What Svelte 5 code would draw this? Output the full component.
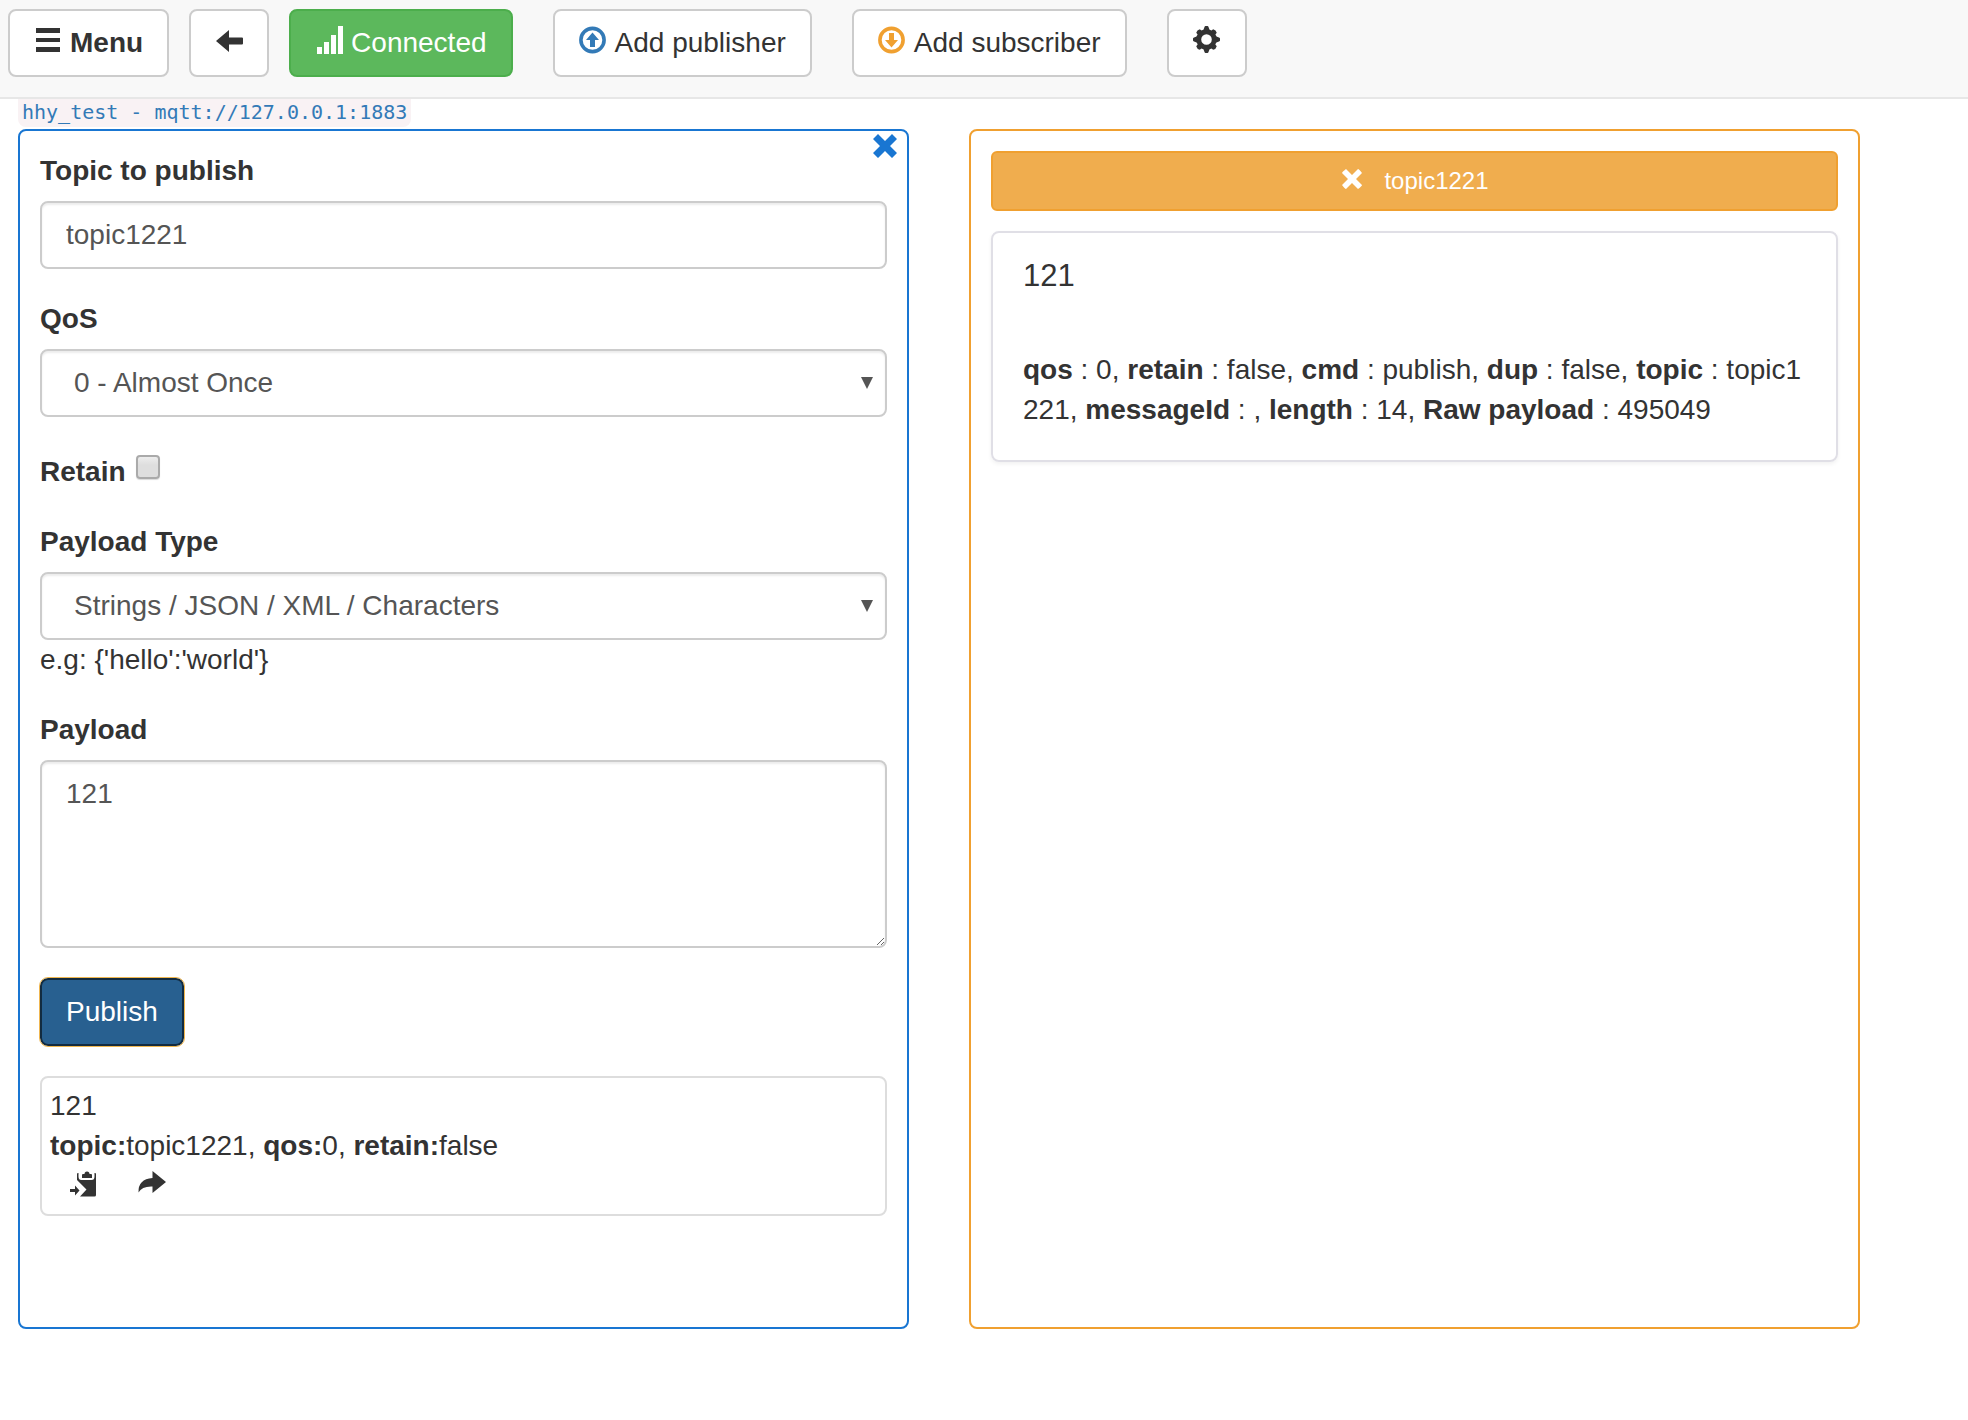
<script>
  let topic = 'topic1221';
  let qos = '0';
  let retain = false;
  let payloadType = 'string';
  let payload = '121';

  let published = [{ payload: '121', topic: 'topic1221', qos: 0, retain: false }];

  let message = {
    payload: '121',
    fields: [
      ['qos', '0'],
      ['retain', 'false'],
      ['cmd', 'publish'],
      ['dup', 'false'],
      ['topic', 'topic1221'],
      ['messageId', ''],
      ['length', '14'],
      ['Raw payload', '495049']
    ]
  };

  const teeth = [0, 90, 180, 270];

  function publish() {
    published = [{ payload, topic, qos: Number(qos), retain }, ...published];
  }

  function republish(item) {
    published = [{ ...item }, ...published];
  }

  function copyToForm(item) {
    payload = item.payload;
    topic = item.topic;
    qos = String(item.qos);
    retain = item.retain;
  }
</script>

<nav class="navbar">
  <button class="btn menu">
    <svg class="icon" viewBox="0 0 28 28"><path d="M2 2h24v5H2zM2 12h24v4H2zM2 21h24v5H2z" /></svg>
    Menu
  </button>
  <button class="btn" aria-label="Back">
    <svg class="icon" viewBox="0 0 28 28"><path d="M1 15 14 4v7.500h13q1 0 1 1v5q0 1-1 1H14V26z" /></svg>
  </button>
  <button class="btn success">
    <svg class="icon" viewBox="0 0 28 28"><path d="M2 21h5v7H2zM9 16h5v12H9zM16 9h5v19h-5zM23 0h5v28h-5z" /></svg>
    Connected
  </button>
  <button class="btn wide">
    <svg class="icon blue" viewBox="0 0 28 28">
      <circle cx="13.500" cy="14" r="11.600" fill="none" stroke="currentColor" stroke-width="3.600" />
      <path d="M13.500 6.500l6.500 7.500h-4v7h-5v-7H7z" />
    </svg>
    Add publisher
  </button>
  <button class="btn wide">
    <svg class="icon orange" viewBox="0 0 28 28">
      <circle cx="13.500" cy="14" r="11.600" fill="none" stroke="currentColor" stroke-width="3.600" />
      <path d="M13.500 21.500l6.500-7.500h-4V7h-5v7H7z" />
    </svg>
    Add subscriber
  </button>
  <button class="btn wide" aria-label="Settings">
    <svg class="icon" viewBox="0 0 28 28">
      <circle cx="13.500" cy="13.500" r="7.800" fill="none" stroke="currentColor" stroke-width="5" />
      {#each teeth as angle}
        <g transform="rotate({angle} 13.5 13.5)">
          <path d="M10 5l1.500-4q.3-1 1-1h2q.7 0 1 1L17 5z" />
          <path d="M10.500 5l.5-3.500q2.500-1.500 5 0l.5 3.500z" transform="rotate(45 13.5 13.5)" />
        </g>
      {/each}
    </svg>
  </button>
</nav>

<main>
  <code>hhy_test - mqtt://127.0.0.1:1883</code>

  <div class="panels">
    <section class="panel publisher">
      <button class="plain close" aria-label="Remove publisher">
        <svg class="icon" viewBox="0 0 28 28"><path d="M7 2l7 7 7-7 5 5-7 7 7 7-5 5-7-7-7 7-5-5 7-7-7-7z" /></svg>
      </button>

      <div class="group">
        <label for="topic">Topic to publish</label>
        <input id="topic" class="control" type="text" bind:value={topic} />
      </div>

      <div class="group">
        <label for="qos">QoS</label>
        <div class="select">
          <select id="qos" class="control" bind:value={qos}>
            <option value="0">0 - Almost Once</option>
            <option value="1">1 - Atleast Once</option>
            <option value="2">2 - Exactly Once</option>
          </select>
          <svg viewBox="0 0 12 12"><path d="M0 0h12L6 12z" /></svg>
        </div>
      </div>

      <div class="group check">
        <label for="retain">Retain</label>
        <input id="retain" type="checkbox" bind:checked={retain} />
      </div>

      <div class="group">
        <label for="payloadType">Payload Type</label>
        <div class="select">
          <select id="payloadType" class="control" bind:value={payloadType}>
            <option value="string">Strings / JSON / XML / Characters</option>
            <option value="int">Integers</option>
            <option value="boolean">Boolean</option>
          </select>
          <svg viewBox="0 0 12 12"><path d="M0 0h12L6 12z" /></svg>
        </div>
        <div>e.g: {"{'hello':'world'}"}</div>
      </div>

      <div class="group">
        <label for="payload">Payload</label>
        <textarea id="payload" class="control" bind:value={payload}></textarea>
      </div>

      <button class="btn primary" on:click={publish}>Publish</button>

      {#each published as item}
        <div class="sent">
          <div>{item.payload}</div>
          <div><b>topic:</b>{item.topic}, <b>qos:</b>{item.qos}, <b>retain:</b>{item.retain}</div>
          <div class="actions">
            <button class="plain" aria-label="Copy to form" on:click={() => copyToForm(item)}>
              <svg class="icon" viewBox="0 0 28 28">
                <path d="M7 4q0-1 1-1h.5v3.500q0 3.500 3 3.500h10q3 0 3-3.500V3h.5q1 0 1 1v21q0 1.500-1.500 1.500H10l6.500-7L7 10z" />
                <path d="M12 8V5q0-1 1-1h1.500q0-2.500 2.500-2.500T19.500 4H21q1 0 1 1v3z" />
                <path d="M0 19h5v-3.500l4.500 5-4.500 5V22H0z" />
              </svg>
            </button>
            <button class="plain" aria-label="Publish again" on:click={() => republish(item)}>
              <svg class="icon" viewBox="0 0 28 28"><path d="M14.500 1 28 12 14.500 23v-6.500Q4 16 .5 22.500 0 9 14.500 8z" /></svg>
            </button>
          </div>
        </div>
      {/each}
    </section>

    <section class="panel subscriber">
      <button class="topic-btn">
        <svg viewBox="0 0 24 24"><path d="M6 2l6 6 6-6q1 0 4 4l-6 6 6 6q0 1-4 4l-6-6-6 6q-1 0-4-4l6-6-6-6q0-1 4-4z" /></svg>
        topic1221
      </button>

      <div class="message">
        <div class="body">{message.payload}</div>
        <div class="meta">
          {#each message.fields as [name, value], i}{#if i > 0}{', '}{/if}<b>{name}</b> : {value}{/each}
        </div>
      </div>
    </section>
  </div>
</main>

<style>
  :global(body) {
    margin: 0;
    background: #fff;
    color: #333;
    font-family: "Liberation Sans", Arial, sans-serif;
    font-size: 28px;
    line-height: 40px;
  }

  button, input, select, textarea {
    font: inherit;
    color: inherit;
    margin: 0;
    box-sizing: border-box;
  }

  button {
    cursor: pointer;
  }

  svg {
    fill: currentColor;
    flex: none;
  }

  .icon {
    width: 28px;
    height: 28px;
  }

  .navbar {
    display: flex;
    gap: 20px;
    padding: 9px 8px 20px;
    background: #f8f8f8;
    border-bottom: 2px solid #e7e7e7;
  }

  .btn {
    display: flex;
    gap: 8px;
    padding: 12px 24px;
    border: 2px solid #ccc;
    border-radius: 8px;
    background: #fff;
    white-space: nowrap;
  }

  .btn .icon {
    margin-top: 3px;
  }

  .menu {
    font-weight: bold;
  }

  .wide {
    margin-left: 20px;
  }

  .success {
    background: #5cb85c;
    border-color: #4cae4c;
    color: #fff;
  }

  .primary {
    background: #286090;
    border-color: #122b40;
    color: #fff;
    outline: 1px solid #efb64f;
  }

  .btn .blue {
    color: #337ab7;
  }

  .btn .orange {
    color: #f0a030;
  }

  main {
    padding: 0 108px 0 18px;
  }

  code {
    display: block;
    width: fit-content;
    height: 28px;
    padding: 0 4px;
    margin-bottom: 2px;
    border-radius: 0 0 8px 8px;
    background: #f9f2f4;
    color: #337ab7;
    font-family: "DejaVu Sans Mono", Consolas, monospace;
    font-size: 20px;
    line-height: 26px;
  }

  .panels {
    display: grid;
    grid-template-columns: 1fr 1fr;
    gap: 60px;
  }

  .panel {
    position: relative;
    box-sizing: border-box;
    min-height: 1200px;
    padding: 20px;
    border: 2px solid;
    border-radius: 8px;
  }

  .publisher {
    border-color: #1976d2;
  }

  .subscriber {
    border-color: #f0a030;
  }

  .plain {
    display: flex;
    padding: 0;
    border: 0;
    background: none;
  }

  .close {
    position: absolute;
    top: 1px;
    right: 8px;
    color: #1976d2;
  }

  .group {
    margin-bottom: 30px;
  }

  label {
    display: block;
    margin-bottom: 10px;
    font-weight: bold;
  }

  .control {
    display: block;
    width: 100%;
    height: 68px;
    padding: 12px 24px;
    border: 2px solid #ccc;
    border-radius: 8px;
    background: #fff;
    box-shadow: inset 0 2px 2px rgba(0, 0, 0, 0.075);
    color: #555;
  }

  .select {
    position: relative;
  }

  .select select {
    appearance: none;
    padding-left: 32px;
  }

  .select svg {
    position: absolute;
    top: 28px;
    right: 14px;
    width: 12px;
    height: 12px;
    color: #555;
    pointer-events: none;
  }

  textarea.control {
    height: 188px;
    resize: vertical;
  }

  .check {
    display: flex;
    gap: 10px;
  }

  .check label {
    margin: 5px 0 0;
  }

  .check input {
    appearance: none;
    width: 24px;
    height: 24px;
    margin-top: 8px;
    border: 2px solid #aaa;
    border-radius: 4px;
    background: linear-gradient(#ededed, #dedede 40%);
    box-shadow: 0 1px 1px rgba(0, 0, 0, 0.15);
  }

  .check input:checked {
    background: #337ab7;
  }

  .sent {
    margin-top: 30px;
    padding: 8px;
    border: 2px solid #ddd;
    border-radius: 8px;
  }

  .actions {
    display: flex;
    gap: 40px;
    height: 36px;
    padding: 4px 20px 0;
  }

  .topic-btn {
    display: flex;
    justify-content: center;
    gap: 20px;
    width: 100%;
    padding: 10px 20px;
    border: 2px solid #f0a030;
    border-radius: 6px;
    background: #f0ad4e;
    color: #fff;
    font-size: 24px;
    line-height: 36px;
  }

  .topic-btn svg {
    width: 24px;
    height: 24px;
    margin-top: 4px;
  }

  .message {
    margin-top: 20px;
    padding: 20px 30px;
    border: 2px solid #e0dfe6;
    border-radius: 8px;
    box-shadow: 0 2px 4px rgba(0, 0, 0, 0.06);
    word-break: break-all;
  }

  .body {
    font-size: 31px;
    line-height: 46px;
  }

  .meta {
    margin: 51px 0 10px;
  }
</style>
